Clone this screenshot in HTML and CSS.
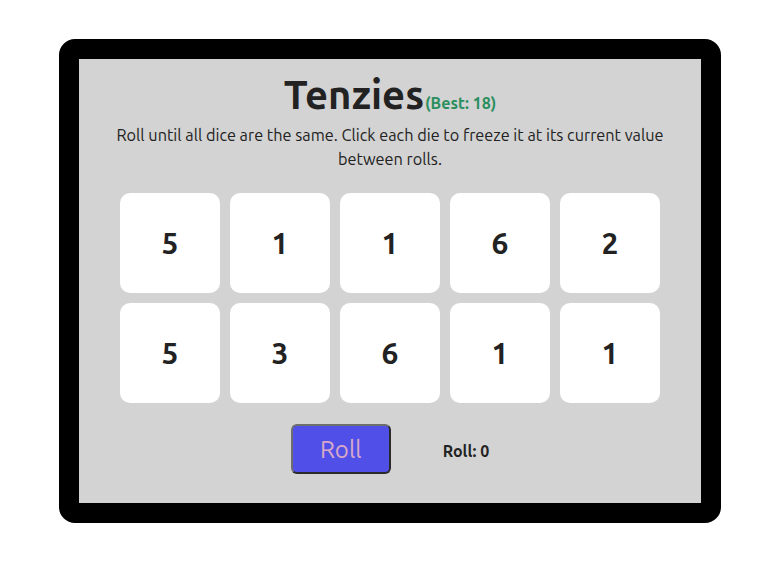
FILE: index.html
```html
<!DOCTYPE html>
<html>
<head>
<meta charset="utf-8">
<link rel="stylesheet" href="styles.css">
</head>
<body>
<main class="frame">
  <div class="title-row">
    <h1 class="title">Tenzies</h1><span class="best">(Best: 18)</span>
  </div>
  <p class="instructions">Roll until all dice are the same. Click each die to freeze it at its current value between rolls.</p>
  <div class="dice">
    <div class="die">5</div>
    <div class="die">1</div>
    <div class="die">1</div>
    <div class="die">6</div>
    <div class="die">2</div>
    <div class="die">5</div>
    <div class="die">3</div>
    <div class="die">6</div>
    <div class="die">1</div>
    <div class="die">1</div>
  </div>
  <div class="controls">
    <button class="roll-btn">Roll</button>
    <span class="roll-count">Roll: 0</span>
  </div>
</main>
</body>
</html>
```
FILE: styles.css
```css
html, body {
  margin: 0;
  padding: 0;
  background: #ffffff;
}
body {
  font-family: "Ubuntu", Lato, "Open Sans", sans-serif;
  color: #2b283a;
}
.frame {
  box-sizing: content-box;
  width: 622px;
  height: 444px;
  margin: 39px 0 0 59px;
  border: 20px solid #000000;
  border-radius: 16px;
  background: #d3d3d3;
  display: flex;
  flex-direction: column;
  align-items: center;
}
.title-row {
  display: flex;
  align-items: baseline;
  margin-top: 11px;
  height: 50px;
}
.title {
  margin: 0;
  font-size: 40px;
  font-weight: 700;
  line-height: 50px;
  color: #222222;
}
.best {
  font-size: 16px;
  font-weight: 700;
  color: #2a8f5e;
  margin-left: 1px;
}
.instructions {
  margin: 3px 0 0;
  width: 570px;
  text-align: center;
  font-size: 16.3px;
  line-height: 24px;
  color: #222222;
}
.dice {
  display: grid;
  grid-template-columns: repeat(5, 100px);
  grid-auto-rows: 100px;
  gap: 10px;
  margin-top: 22px;
}
.die {
  background: #ffffff;
  border-radius: 10px;
  display: flex;
  align-items: center;
  justify-content: center;
  font-size: 30px;
  font-weight: 700;
  color: #222222;
}
.controls {
  display: flex;
  align-items: center;
  gap: 52px;
  margin-top: 21px;
}
.roll-btn {
  box-sizing: border-box;
  width: 100px;
  height: 50px;
  background: #5050e8;
  border: 2px solid #6e6e6e;
  border-bottom-color: #2a2a2a;
  border-right-color: #2a2a2a;
  border-radius: 6px;
  color: #d8a8c8;
  font-family: "Ubuntu", Lato, "Open Sans", sans-serif;
  font-size: 24px;
  padding: 0;
}
.roll-count {
  margin-top: 3px;
  font-size: 16px;
  font-weight: 700;
  color: #222222;
}
```
